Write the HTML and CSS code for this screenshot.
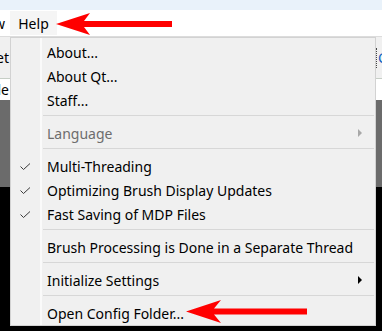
FILE: index.html
```html
<!DOCTYPE html>
<html>
<head>
<meta charset="utf-8">
<link rel="stylesheet" href="styles.css">
</head>
<body>
<div class="window">
  <div class="titlebar"></div>
  <div class="menubar">
    <div class="mb-clip"><span>View</span></div>
    <div class="mb-item">Help</div>
  </div>
  <div class="workspace">
    <div class="toolbar">
      <div class="tb-clip"><span>Reset</span></div>
      <div class="tb-right"><span class="tb-sep"></span><span class="tb-icon">C</span></div>
    </div>
    <div class="tabrow">
      <div class="tb-clip"><span>Title</span></div>
    </div>
    <div class="canvas"></div>
  </div>
</div>

<div class="menu">
  <div class="item"><span class="check"></span><span class="label">About...</span></div>
  <div class="item"><span class="check"></span><span class="label">About Qt...</span></div>
  <div class="item"><span class="check"></span><span class="label">Staff...</span></div>
  <div class="sep"></div>
  <div class="item disabled"><span class="check"></span><span class="label">Language</span><span class="sub"></span></div>
  <div class="sep"></div>
  <div class="item"><span class="check"><svg width="11" height="8" viewBox="0 0 11 8"><polyline points="0.5,3.5 3.5,6.5 10,0.5" fill="none" stroke="#3a3a3a" stroke-width="1"/></svg></span><span class="label">Multi-Threading</span></div>
  <div class="item"><span class="check"><svg width="11" height="8" viewBox="0 0 11 8"><polyline points="0.5,3.5 3.5,6.5 10,0.5" fill="none" stroke="#3a3a3a" stroke-width="1"/></svg></span><span class="label">Optimizing Brush Display Updates</span></div>
  <div class="item"><span class="check"><svg width="11" height="8" viewBox="0 0 11 8"><polyline points="0.5,3.5 3.5,6.5 10,0.5" fill="none" stroke="#3a3a3a" stroke-width="1"/></svg></span><span class="label">Fast Saving of MDP Files</span></div>
  <div class="sep"></div>
  <div class="item"><span class="check"></span><span class="label">Brush Processing is Done in a Separate Thread</span></div>
  <div class="sep"></div>
  <div class="item"><span class="check"></span><span class="label">Initialize Settings</span><span class="sub"></span></div>
  <div class="sep"></div>
  <div class="item"><span class="check"></span><span class="label">Open Config Folder...</span></div>
</div>

<svg class="arrows" width="382" height="331" viewBox="0 0 382 331">
  <polygon points="56,24 90,13 84,21 172,21 172,27 84,27 90,35" fill="#ff0000"/>
  <polygon points="186,311.5 221,300 214,308.5 307,308.5 307,314.5 214,314.5 221,323" fill="#ff0000"/>
</svg>
</body>
</html>
```

FILE: styles.css
```css
html, body {
  margin: 0;
  padding: 0;
}
body {
  width: 382px;
  height: 331px;
  overflow: hidden;
  background: #000;
  font-family: "Noto Sans", "Open Sans", sans-serif;
  font-size: 14px;
  color: #000;
  position: relative;
}
.window {
  display: flex;
  flex-direction: column;
  height: 331px;
}
.titlebar {
  height: 10px;
  background: #e9f2fa;
}
.menubar {
  height: 26px;
  background: #fff;
  border-bottom: 1px solid #dcdcdc;
  display: flex;
  align-items: stretch;
}
.mb-clip {
  width: 10px;
  display: flex;
  justify-content: flex-end;
  align-items: center;
  overflow: hidden;
  padding-right: 0;
}
.mb-clip span {
  margin-right: 5px;
  white-space: nowrap;
}
.mb-item {
  width: 47px;
  margin-top: 1px;
  margin-bottom: 1px;
  display: flex;
  align-items: center;
  justify-content: center;
  background: #f5f5f5;
}
.workspace {
  flex: 1;
  display: flex;
  flex-direction: column;
}
.toolbar {
  height: 41px;
  background: #f0f0f0;
  border-bottom: 1px solid #c6cec6;
  display: flex;
  justify-content: space-between;
  align-items: center;
}
.tb-clip {
  width: 10px;
  display: flex;
  justify-content: flex-end;
  overflow: hidden;
}
.tb-clip span {
  white-space: nowrap;
  margin-right: 1px;
}
.tb-right {
  width: 6px;
  height: 100%;
  display: flex;
  align-items: center;
  overflow: hidden;
}
.tb-sep {
  width: 1px;
  height: 20px;
  border-left: 1px dotted #444;
  margin-right: 1px;
}
.tb-icon {
  color: #1060c0;
  white-space: nowrap;
}
.tabrow {
  height: 21px;
  background: #fff;
  display: flex;
  align-items: center;
}
.canvas {
  height: 87px;
  background: #6b6b6b;
}

.menu {
  position: absolute;
  left: 10px;
  top: 37px;
  width: 364px;
  border: 1px solid #d2d2d2;
  padding-top: 2px;
  background: linear-gradient(to right, #f0f0f0 29px, #fafafa 29px, #fafafa 31px, #f0f0f0 31px);
  display: flex;
  flex-direction: column;
}
.item {
  height: 24px;
  display: flex;
  align-items: center;
}
.check {
  width: 36px;
  height: 24px;
  display: flex;
  align-items: center;
  padding-left: 9px;
  box-sizing: border-box;
}
.check svg {
  display: block;
  margin-top: 1px;
}
.label {
  flex: 1;
  white-space: nowrap;
}
.disabled .label {
  color: #6d6d6d;
}
.sub {
  width: 0;
  height: 0;
  border-top: 4px solid transparent;
  border-bottom: 4px solid transparent;
  border-left: 4px solid #000;
  margin-right: 13px;
}
.disabled .sub {
  border-left-color: #a8a8a8;
}
.sep {
  height: 1px;
  background: #d7d7d7;
  margin: 3px 1px 5px 32px;
}
.arrows {
  position: absolute;
  left: 0;
  top: 0;
  pointer-events: none;
}
```
